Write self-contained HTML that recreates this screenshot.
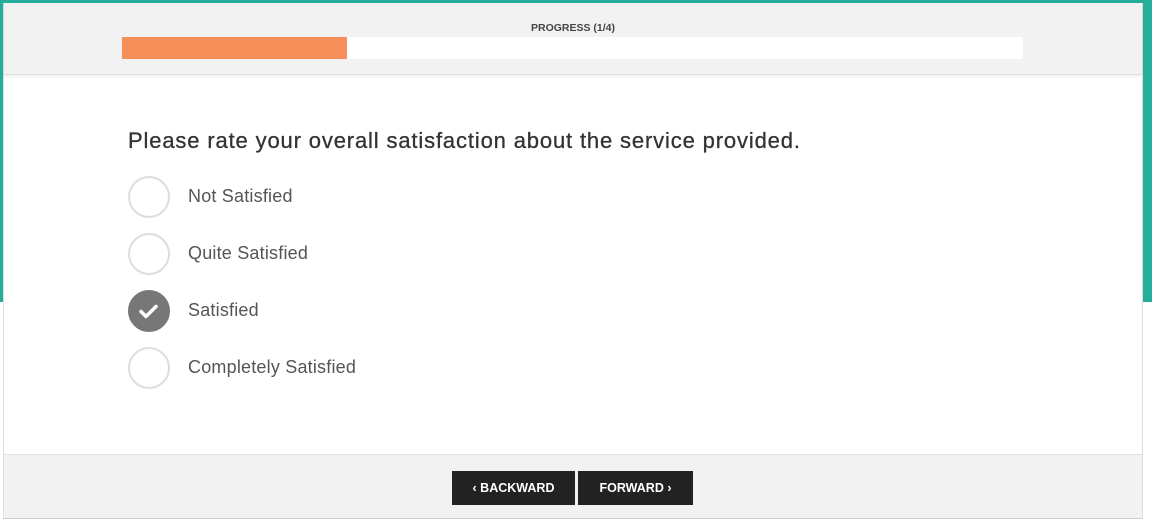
<!DOCTYPE html>
<html><head><style>
*{margin:0;padding:0;box-sizing:border-box}
body{width:1152px;height:520px;position:relative;overflow:hidden;background:#fff;font-family:"Liberation Sans",sans-serif}
.teal{position:absolute;left:0;top:0;width:1152px;height:302px;background:#26ae9d}
.card{position:absolute;left:3px;top:3px;width:1140px;height:516px;background:#fff;border-right:1px solid #ddd;border-left:1px solid #ddd;border-bottom:1px solid #ccc}
.head{position:absolute;left:0;top:0;width:1138px;height:72px;background:#f2f2f2;border-bottom:1px solid #e0e0e0;box-shadow:0 2px 3px rgba(0,0,0,0.06)}
.ptxt{position:absolute;left:0;width:1138px;top:19px;text-align:center;font-size:10.5px;font-weight:bold;color:#444}
.bar{position:absolute;left:118px;top:34px;width:901px;height:22px;background:#fff}
.fill{position:absolute;left:0;top:0;width:225px;height:22px;background:#f79058}
.q{position:absolute;left:124px;top:125px;font-size:22px;color:#333;letter-spacing:0.85px;-webkit-text-stroke:0.3px #333}
.opt{position:absolute;left:124px;height:42px}
.c{position:absolute;left:0;top:0;width:42px;height:42px;border-radius:50%;border:2px solid #ddd;background:#fff}
.c.on{background:#777;border-color:#777}
.l{position:absolute;left:60px;top:10px;font-size:18px;color:#555;white-space:nowrap;letter-spacing:0.2px}
.foot{position:absolute;left:0;top:451px;width:1138px;height:64px;background:#f2f2f2;border-top:1px solid #e0e0e0}
.btn{position:absolute;top:16px;height:34px;background:#222;color:#fff;font-size:12.5px;font-weight:bold;line-height:34px;text-align:center}
</style></head><body>
<div class="teal"></div>
<div class="card">
 <div class="head"><div class="ptxt">PROGRESS (1/4)</div><div class="bar"><div class="fill"></div></div></div>
 <div class="q">Please rate your overall satisfaction about the service provided.</div>
 <div class="opt" style="top:173px"><div class="c"></div><div class="l">Not Satisfied</div></div>
 <div class="opt" style="top:230px"><div class="c"></div><div class="l">Quite Satisfied</div></div>
 <div class="opt" style="top:287px"><div class="c on"><svg width="38" height="38" viewBox="0 0 38 38"><path d="M11 19.5l5 5 10-10" stroke="#fff" stroke-width="3.5" fill="none" stroke-linecap="round" stroke-linejoin="round"/></svg></div><div class="l">Satisfied</div></div>
 <div class="opt" style="top:344px"><div class="c"></div><div class="l">Completely Satisfied</div></div>
 <div class="foot">
  <div class="btn" style="left:448px;width:123px">&#8249; BACKWARD</div>
  <div class="btn" style="left:574px;width:115px">FORWARD &#8250;</div>
 </div>
</div>
</body></html>
